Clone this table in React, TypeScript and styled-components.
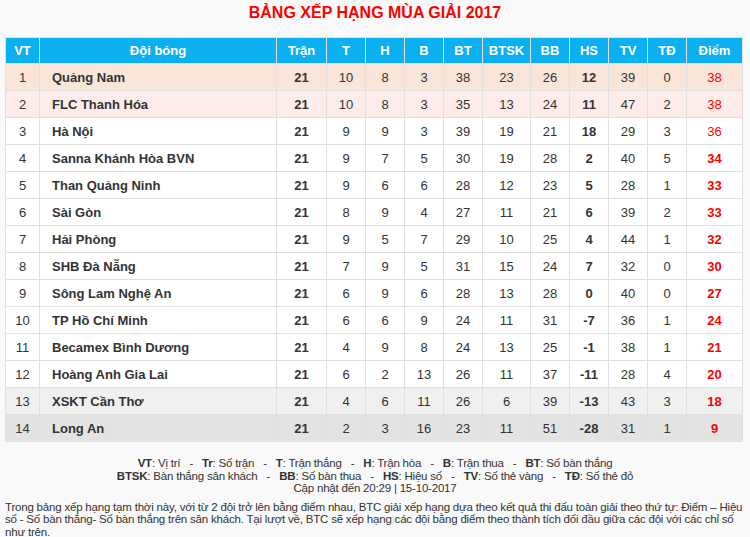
import React from 'react';
import styled, { createGlobalStyle } from 'styled-components';

type Team = {
  name: string;
  stats: number[]; // Trận, T, H, B, BT, BTSK, BB, HS, TV, TĐ, Điểm
};

const TEAMS: Team[] = [
  { name: 'Quảng Nam', stats: [21, 10, 8, 3, 38, 23, 26, 12, 39, 0, 38] },
  { name: 'FLC Thanh Hóa', stats: [21, 10, 8, 3, 35, 13, 24, 11, 47, 2, 38] },
  { name: 'Hà Nội', stats: [21, 9, 9, 3, 39, 19, 21, 18, 29, 3, 36] },
  { name: 'Sanna Khánh Hòa BVN', stats: [21, 9, 7, 5, 30, 19, 28, 2, 40, 5, 34] },
  { name: 'Than Quảng Ninh', stats: [21, 9, 6, 6, 28, 12, 23, 5, 28, 1, 33] },
  { name: 'Sài Gòn', stats: [21, 8, 9, 4, 27, 11, 21, 6, 39, 2, 33] },
  { name: 'Hải Phòng', stats: [21, 9, 5, 7, 29, 10, 25, 4, 44, 1, 32] },
  { name: 'SHB Đà Nẵng', stats: [21, 7, 9, 5, 31, 15, 24, 7, 32, 0, 30] },
  { name: 'Sông Lam Nghệ An', stats: [21, 6, 9, 6, 28, 13, 28, 0, 40, 0, 27] },
  { name: 'TP Hồ Chí Minh', stats: [21, 6, 6, 9, 24, 11, 31, -7, 36, 1, 24] },
  { name: 'Becamex Bình Dương', stats: [21, 4, 9, 8, 24, 13, 25, -1, 38, 1, 21] },
  { name: 'Hoàng Anh Gia Lai', stats: [21, 6, 2, 13, 26, 11, 37, -11, 28, 4, 20] },
  { name: 'XSKT Cần Thơ', stats: [21, 4, 6, 11, 26, 6, 39, -13, 43, 3, 18] },
  { name: 'Long An', stats: [21, 2, 3, 16, 23, 11, 51, -28, 31, 1, 9] },
];

const COLUMNS = [
  { label: 'VT', width: 34 },
  { label: 'Đội bóng', width: 237 },
  { label: 'Trận', width: 50 },
  { label: 'T', width: 39 },
  { label: 'H', width: 39 },
  { label: 'B', width: 39 },
  { label: 'BT', width: 39 },
  { label: 'BTSK', width: 48 },
  { label: 'BB', width: 39 },
  { label: 'HS', width: 39 },
  { label: 'TV', width: 39 },
  { label: 'TĐ', width: 39 },
  { label: 'Điểm', width: 56 },
];

const LEGEND: [string, string][][] = [
  [['VT', 'Vị trí'], ['Tr', 'Số trận'], ['T', 'Trận thắng'], ['H', 'Trận hòa'], ['B', 'Trận thua'], ['BT', 'Số bàn thắng']],
  [['BTSK', 'Bàn thắng sân khách'], ['BB', 'Số bàn thua'], ['HS', 'Hiệu số'], ['TV', 'Số thẻ vàng'], ['TĐ', 'Số thẻ đỏ']],
];

type RowTone = 'first' | 'second' | 'plain' | 'light' | 'dark';

const toneFor = (index: number): RowTone => {
  if (index === 0) return 'first';
  if (index === 1) return 'second';
  if (index === 12) return 'light';
  if (index === 13) return 'dark';
  return 'plain';
};

const TONES: Record<RowTone, string> = {
  first: '#f9e6d9',
  second: '#fdece9',
  plain: '#ffffff',
  light: '#f0f0f0',
  dark: '#e3e3e3',
};

export default function App() {
  return (
    <>
      <GlobalStyle />
      <Page>
        <Title>BẢNG XẾP HẠNG MÙA GIẢI 2017</Title>
        <Table>
          <colgroup>
            {COLUMNS.map(col => (
              <col key={col.label} style={{ width: col.width }} />
            ))}
          </colgroup>
          <thead>
            <tr>
              {COLUMNS.map(col => (
                <HeadCell key={col.label}>{col.label}</HeadCell>
              ))}
            </tr>
          </thead>
          <tbody>
            {TEAMS.map((team, i) => (
              <Row key={team.name} $tone={toneFor(i)}>
                <Cell>{i + 1}</Cell>
                <NameCell>{team.name}</NameCell>
                {team.stats.map((value, j) => {
                  if (j === 10) {
                    return (
                      <PointsCell key={j} $bold={i > 2}>
                        {value}
                      </PointsCell>
                    );
                  }
                  return (
                    <Cell key={j} $bold={j === 0 || j === 7}>
                      {value}
                    </Cell>
                  );
                })}
              </Row>
            ))}
          </tbody>
        </Table>
        <Legend>
          {LEGEND.map((line, li) => (
            <LegendLine key={li}>
              {line.map(([abbr, text], k) => (
                <React.Fragment key={abbr}>
                  {k > 0 && <Separator>-</Separator>}
                  <b>{abbr}</b>: {text}
                </React.Fragment>
              ))}
            </LegendLine>
          ))}
          <LegendLine>Cập nhật đến 20:29 | 15-10-2017</LegendLine>
        </Legend>
        <Note>
          Trong bảng xếp hạng tạm thời này, với từ 2 đội trở lên bằng điểm nhau, BTC giải xếp hạng dựa theo kết quả thi đấu toàn
          giải theo thứ tự: Điểm – Hiệu số - Số bàn thắng- Số bàn thắng trên sân khách. Tại lượt về, BTC sẽ xếp hạng các đội bằng
          điểm theo thành tích đối đầu giữa các đội với các chỉ số như trên.
        </Note>
      </Page>
    </>
  );
}

const GlobalStyle = createGlobalStyle`
  html, body {
    margin: 0;
    padding: 0;
    background: #f9f9f9;
  }

  body {
    font-family: 'Liberation Sans', Arial, sans-serif;
    color: #333;
  }
`;

const Page = styled.div`
  width: 750px;
  padding: 0 5px;
  box-sizing: border-box;
`;

const Title = styled.h1`
  margin: 0;
  height: 37px;
  padding-top: 4px;
  box-sizing: border-box;
  text-align: center;
  font-size: 16px;
  font-weight: 700;
  color: #f00;
`;

const Table = styled.table`
  width: 738px;
  border-collapse: collapse;
  table-layout: fixed;
  font-size: 13px;
  border: 1px solid #e0e0e0;
`;

const HeadCell = styled.th`
  height: 26px;
  padding: 0;
  box-sizing: border-box;
  background: #0ab0f0;
  color: #fff;
  font-weight: 700;
  font-size: 13px;
  text-align: center;
  border: 1px solid #e0e0e0;
  border-top: none;
`;

const Row = styled.tr<{ $tone: RowTone }>`
  background: ${props => TONES[props.$tone]};
`;

const Cell = styled.td<{ $bold?: boolean }>`
  height: 27px;
  padding: 0;
  box-sizing: border-box;
  text-align: center;
  border: 1px solid #e0e0e0;
  font-weight: ${props => (props.$bold ? 700 : 400)};
  color: #333;
`;

const NameCell = styled(Cell)`
  text-align: left;
  padding-left: 12px;
  font-weight: 700;
`;

const PointsCell = styled(Cell)`
  color: #f00;
`;

const Legend = styled.div`
  margin-top: 15px;
  text-align: center;
  font-size: 11.5px;
  letter-spacing: -0.2px;
  line-height: 12.5px;
  color: #333;
`;

const LegendLine = styled.div``;

const Separator = styled.span`
  display: inline-block;
  padding: 0 9px;
`;

const Note = styled.p`
  margin: 6px 0 0;
  font-size: 11.5px;
  letter-spacing: -0.2px;
  line-height: 12.5px;
  color: #333;
`;
